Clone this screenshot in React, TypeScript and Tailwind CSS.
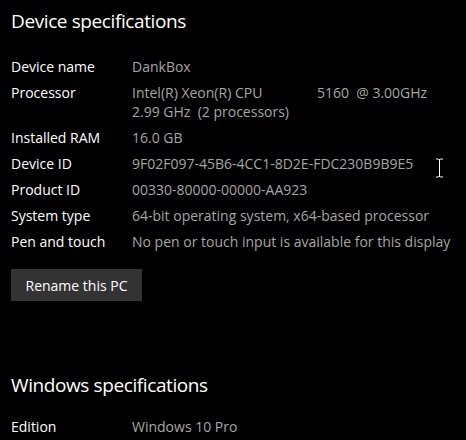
import React from "react";

const specs: { label: string; value: string[] }[] = [
  { label: "Device name", value: ["DankBox"] },
  { label: "Processor", value: ["Intel(R) Xeon(R) CPU               5160  @ 3.00GHz", "2.99 GHz  (2 processors)"] },
  { label: "Installed RAM", value: ["16.0 GB"] },
  { label: "Device ID", value: ["9F02F097-45B6-4CC1-8D2E-FDC230B9B9E5"] },
  { label: "Product ID", value: ["00330-80000-00000-AA923"] },
  { label: "System type", value: ["64-bit operating system, x64-based processor"] },
  { label: "Pen and touch", value: ["No pen or touch input is available for this display"] },
];

function SpecRow({ label, value }: { label: string; value: string[] }) {
  return (
    <div className="flex text-[14px] leading-[19px]">
      <div className="w-[121px] shrink-0 text-white">{label}</div>
      <div className="text-[#a6a6a6] whitespace-pre">
        {value.map((v) => (
          <div key={v}>{v}</div>
        ))}
      </div>
    </div>
  );
}

export default function App() {
  return (
    <div
      className="relative w-[466px] h-[440px] overflow-hidden bg-black px-[11px] pt-[7px]"
      style={{ fontFamily: '"Open Sans", "Noto Sans", sans-serif' }}
    >
      <h2 className="text-[19px] leading-[28px] tracking-[-0.4px] text-white">Device specifications</h2>

      <div className="mt-[22px] flex flex-col gap-[7px]">
        {specs.map((s) => (
          <SpecRow key={s.label} label={s.label} value={s.value} />
        ))}
      </div>

      <button className="mt-[18px] block h-[32px] w-[131px] bg-[#333333] text-[14px] text-white">
        Rename this PC
      </button>

      <h2 className="mt-[70px] text-[19px] leading-[28px] tracking-[-0.4px] text-white">
        Windows specifications
      </h2>

      <div className="mt-[18px]">
        <SpecRow label="Edition" value={["Windows 10 Pro"]} />
      </div>

      {/* text cursor */}
      <svg className="absolute left-[435px] top-[158px]" width="9" height="20" viewBox="0 0 9 20">
        <path d="M1 1h2.5M5.5 1H8M4.5 1.5v17M1 19h2.5M5.5 19H8" stroke="#fff" strokeWidth="1" fill="none" />
        <path d="M3.5 1.5h2M3.5 18.5h2" stroke="#fff" strokeWidth="1" />
      </svg>
    </div>
  );
}
